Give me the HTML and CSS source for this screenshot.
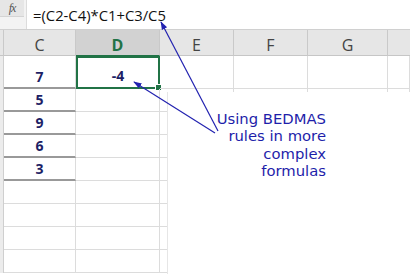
FILE: index.html
```html
<!DOCTYPE html>
<html lang="en">
<head>
    <meta charset="UTF-8">
    <meta name="viewport" content="width=device-width, initial-scale=1.0">
    <title>BEDMAS Formula</title>
    <link rel="stylesheet" href="styles.css">
</head>
<body>
    <div class="sheet">
        <div class="formula-bar">
            <div class="fx-box"><span class="fx">fx</span></div>
            <div class="formula">=(C2-C4)*C1+C3/C5</div>
        </div>
        <div class="grid">
            <div class="hd corner"></div>
            <div class="hd">C</div>
            <div class="hd active">D</div>
            <div class="hd">E</div>
            <div class="hd">F</div>
            <div class="hd">G</div>
            <div class="hd last"></div>

            <div class="rh"></div>
            <div class="cell val">7</div>
            <div class="cell val selected">-4<span class="handle"></span></div>
            <div class="cell"></div><div class="cell"></div><div class="cell"></div><div class="cell"></div>

            <div class="rh"></div>
            <div class="cell val">5</div>
            <div class="cell"></div><div class="cell"></div><div class="cell"></div><div class="cell"></div><div class="cell"></div>

            <div class="rh"></div>
            <div class="cell val">9</div>
            <div class="cell"></div><div class="cell"></div><div class="cell"></div><div class="cell"></div><div class="cell"></div>

            <div class="rh"></div>
            <div class="cell val">6</div>
            <div class="cell"></div><div class="cell"></div><div class="cell"></div><div class="cell"></div><div class="cell"></div>

            <div class="rh"></div>
            <div class="cell val">3</div>
            <div class="cell"></div><div class="cell"></div><div class="cell"></div><div class="cell"></div><div class="cell"></div>

            <div class="rh"></div>
            <div class="cell"></div><div class="cell"></div><div class="cell"></div><div class="cell"></div><div class="cell"></div><div class="cell"></div>

            <div class="rh"></div>
            <div class="cell"></div><div class="cell"></div><div class="cell"></div><div class="cell"></div><div class="cell"></div><div class="cell"></div>

            <div class="rh"></div>
            <div class="cell"></div><div class="cell"></div><div class="cell"></div><div class="cell"></div><div class="cell"></div><div class="cell"></div>

            <div class="rh"></div>
            <div class="cell"></div><div class="cell"></div><div class="cell"></div><div class="cell"></div><div class="cell"></div><div class="cell"></div>
        </div>

        <div class="callout">Using BEDMAS<br>rules in more<br>complex<br>formulas</div>

        <svg class="arrows" width="410" height="274" viewBox="0 0 410 274">
            <defs>
                <marker id="head" viewBox="0 0 10 10" refX="9" refY="5" markerWidth="7" markerHeight="7" orient="auto">
                    <path d="M0 1.5 L10 5 L0 8.5 Z" fill="#2222b0"/>
                </marker>
            </defs>
            <line x1="218" y1="131" x2="161" y2="22" stroke="#2222b0" stroke-width="1.2" marker-end="url(#head)"/>
            <line x1="215" y1="133" x2="134" y2="82" stroke="#2222b0" stroke-width="1.2" marker-end="url(#head)"/>
        </svg>
    </div>
</body>
</html>
```

FILE: styles.css
```css
body {
    margin: 0;
    background: #ffffff;
    font-family: "Open Sans", "Liberation Sans", sans-serif;
}

.sheet {
    position: relative;
    width: 410px;
    height: 274px;
    overflow: hidden;
    background: #ffffff;
}

.formula-bar {
    display: flex;
    height: 30px;
    background: #f3f3f3;
    border-bottom: 1px solid #d0d0d0;
    box-sizing: border-box;
}

.fx-box {
    width: 24px;
    height: 17px;
    background: #e6e6e6;
    border-bottom: 1px solid #d4d4d4;
    box-sizing: border-box;
    display: flex;
    justify-content: center;
    align-items: center;
}

.fx {
    font-family: "Liberation Serif", serif;
    font-style: italic;
    font-size: 12px;
    color: #555555;
    letter-spacing: -1px;
}

.formula {
    flex: 1;
    margin-left: 2px;
    height: 29px;
    background: #ffffff;
    border-left: 1px solid #dcdcdc;
    box-sizing: border-box;
    padding: 5px 0 0 6px;
    font-size: 14.8px;
    color: #111111;
}

.grid {
    display: grid;
    grid-template-columns: 4px 72px 84px 74px 74px 80px 22px;
    grid-template-rows: 26px 33px;
    grid-auto-rows: 23px;
}

.hd {
    background: #e6e6e6;
    border-right: 1px solid #c9c9c9;
    border-bottom: 1px solid #c6c6c6;
    box-sizing: border-box;
    display: flex;
    justify-content: center;
    align-items: center;
    padding-top: 4px;
    font-size: 16px;
    color: #444444;
}

.hd.active {
    background: #d2d2d2;
    color: #217346;
    font-weight: bold;
    border-bottom: 1px solid #217346;
}

.hd.last {
    border-right: none;
}

.rh {
    background: #ececec;
    border-right: 1px solid #cfcfcf;
    box-sizing: border-box;
}

.cell {
    position: relative;
    border-right: 1px solid #dcdcdc;
    border-bottom: 1px solid #dcdcdc;
    box-sizing: border-box;
    display: flex;
    justify-content: center;
    align-items: flex-end;
    padding-bottom: 3px;
    font-size: 14px;
    font-weight: bold;
    line-height: 1;
    color: #1d1f66;
}

.cell.val {
    border-bottom: 2px solid #999999;
}

.cell.selected {
    border: 2px solid #217346;
    padding-bottom: 4px;
}

.handle {
    position: absolute;
    right: -4px;
    bottom: -4px;
    width: 5px;
    height: 5px;
    background: #217346;
    border: 1px solid #ffffff;
}

.callout {
    position: absolute;
    left: 167px;
    top: 92px;
    right: 0;
    bottom: 0;
    background: #ffffff;
    border-left: 1px solid #e6e6e6;
    padding: 18px 84px 0 0;
    text-align: right;
    font-family: "DejaVu Sans", Verdana, sans-serif;
    font-size: 14.8px;
    line-height: 17.4px;
    color: #1e1eaa;
}

.arrows {
    position: absolute;
    top: 0;
    left: 0;
    pointer-events: none;
}
```
